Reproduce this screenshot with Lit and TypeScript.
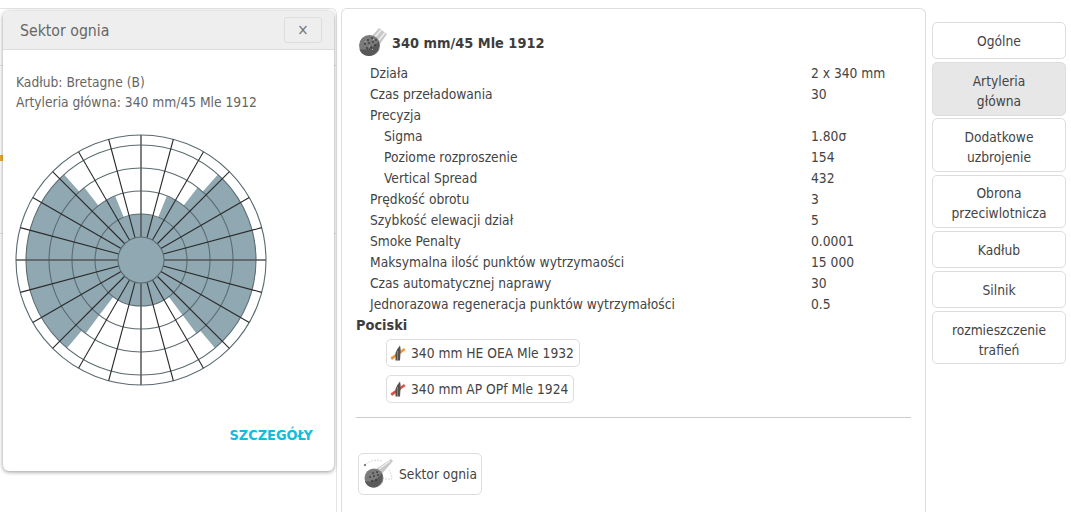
import { LitElement, html, svg, css } from 'lit';
import { customElement, property } from 'lit/decorators.js';

const CX = 126;
const CY = 126;
const RINGS = [23, 46, 69, 92, 115, 125];

interface Row {
  label: string;
  value?: string;
  sub?: boolean;
}

const ROWS: Row[] = [
  { label: 'Działa', value: '2 x 340 mm' },
  { label: 'Czas przeładowania', value: '30' },
  { label: 'Precyzja' },
  { label: 'Sigma', value: '1.80σ', sub: true },
  { label: 'Poziome rozproszenie', value: '154', sub: true },
  { label: 'Vertical Spread', value: '432', sub: true },
  { label: 'Prędkość obrotu', value: '3' },
  { label: 'Szybkość elewacji dział', value: '5' },
  { label: 'Smoke Penalty', value: '0.0001' },
  { label: 'Maksymalna ilość punktów wytrzymaości', value: '15 000' },
  { label: 'Czas automatycznej naprawy', value: '30' },
  { label: 'Jednorazowa regeneracja punktów wytrzymałości', value: '0.5' },
];

const NAV = [
  ['Ogólne'],
  ['Artyleria', 'główna'],
  ['Dodatkowe', 'uzbrojenie'],
  ['Obrona', 'przeciwlotnicza'],
  ['Kadłub'],
  ['Silnik'],
  ['rozmieszczenie', 'trafień'],
];

// angle in degrees clockwise from the bow (up)
function pt(r: number, deg: number) {
  const a = (deg * Math.PI) / 180;
  return `${(CX + r * Math.sin(a)).toFixed(2)} ${(CY - r * Math.cos(a)).toFixed(2)}`;
}

// ring sector, from angle a to angle b going clockwise
function sector(r0: number, r1: number, a: number, b: number) {
  const large = b - a > 180 ? 1 : 0;
  return `M${pt(r0, a)} A${r0} ${r0} 0 ${large} 1 ${pt(r0, b)} L${pt(r1, b)} A${r1} ${r1} 0 ${large} 0 ${pt(r1, a)} Z`;
}

// [inner, outer, angle from bow, angle from stern] on each side
const ARCS = [
  [46, 69, 22, 37],
  [69, 92, 38, 37],
  [92, 115, 42, 40],
];

function shadePath() {
  let d = `M${CX} ${CY - 46} A46 46 0 1 1 ${CX} ${CY + 46} A46 46 0 1 1 ${CX} ${CY - 46} Z`;
  for (const [r0, r1, bow, stern] of ARCS) {
    d += ' ' + sector(r0, r1, bow, 180 - stern);
    d += ' ' + sector(r0, r1, 180 + stern, 360 - bow);
  }
  return d;
}

@customElement('sector-chart')
export class SectorChart extends LitElement {
  static override styles = css`
    :host {
      display: block;
    }
    svg {
      display: block;
    }
    .ring {
      fill: none;
      stroke: #5b6b70;
      stroke-width: 1.1;
    }
    .spoke {
      stroke: #2a2a2a;
      stroke-width: 1.1;
    }
    .axis {
      stroke: #555;
      stroke-width: 2;
      opacity: 0.75;
    }
    .shade {
      fill: #8fa8b2;
    }
    .hub {
      fill: #8fa8b2;
      stroke: #5b6b70;
      stroke-width: 1.1;
    }
  `;

  override render() {
    const spokes = [];
    for (let deg = 15; deg < 360; deg += 15) {
      if (deg % 90 === 0) continue;
      spokes.push(svg`<path class="spoke" d="M${pt(23, deg)} L${pt(125, deg)}" />`);
    }
    return html`
      <svg width="252" height="252" viewBox="0 0 252 252">
        <path class="shade" d="${shadePath()}" />
        ${RINGS.slice(1).map(
          (r) => svg`<circle class="ring" cx="${CX}" cy="${CY}" r="${r}" />`
        )}
        ${spokes}
        <path class="axis" d="M${CX} ${CY - 125} V${CY - 23} M${CX} ${CY + 23} V${CY + 125}" />
        <path class="axis" d="M${CX - 125} ${CY} H${CX - 23} M${CX + 23} ${CY} H${CX + 125}" />
        <circle class="hub" cx="${CX}" cy="${CY}" r="23" />
      </svg>
    `;
  }
}

@customElement('gun-icon')
export class GunIcon extends LitElement {
  static override styles = css`
    :host {
      display: block;
      flex: none;
    }
    svg {
      display: block;
    }
  `;

  override render() {
    return html`
      <svg width="32" height="32" viewBox="0 0 32 32">
        <path d="M14 9 L21 1 L29 7 L22 17 Z" fill="#c8c8c8" />
        <path d="M17 10 L23.5 2.5 M21 13 L27 5.5" stroke="#efefef" stroke-width="1.4" />
        <circle cx="11.5" cy="18.5" r="10.5" fill="#7a7a7a" />
        <path d="M1.5 22 C7 24 15 21 21 14 C23 22 17 29 11 29 C6 29 2.5 26 1.5 22 Z" fill="#585858" />
        <path d="M9 13h2M13 11h2M6 17h2M10 16h2M14 15h2M17 13h2M8 21h2M12 20h2M16 18h2" stroke="#242424" stroke-width="1.2" />
        <path d="M7 14l1 1M11 19l1 1M15 12l1 1M14 22l1 1" stroke="#b4b4b4" stroke-width="1" />
      </svg>
    `;
  }
}

@customElement('sector-icon')
export class SectorIcon extends LitElement {
  static override styles = css`
    :host {
      display: block;
      flex: none;
    }
    svg {
      display: block;
    }
  `;

  override render() {
    return html`
      <svg width="32" height="32" viewBox="0 0 32 32">
        <path d="M1 8 A17 17 0 0 1 19 3 M26 12 A16 16 0 0 1 29 21 L22 21" fill="none" stroke="#bbb" stroke-width="0.8" stroke-dasharray="1.5 1.5" />
        <circle cx="2" cy="7" r="1.1" fill="#666" />
        <path d="M13 11 L28 1 L30 3 L18 17 Z" fill="#c8c8c8" />
        <path d="M16 11 L27 3" stroke="#efefef" stroke-width="1.2" />
        <circle cx="11" cy="20" r="9.5" fill="#7c7c7c" />
        <path d="M2 23 C7 25 14 22 19 15 C21 22 16 29.5 11 29.5 C6 29.5 3 27 2 23 Z" fill="#5a5a5a" />
        <path d="M9 15h2M13 14h2M6 19h2M10 18h2M14 17h2M8 23h2M12 22h2" stroke="#262626" stroke-width="1.1" />
      </svg>
    `;
  }
}

@customElement('shell-icon')
export class ShellIcon extends LitElement {
  @property() tint = '#ee8a2c';

  static override styles = css`
    :host {
      display: block;
      flex: none;
    }
    svg {
      display: block;
    }
  `;

  override render() {
    return html`
      <svg width="16" height="16" viewBox="0 0 16 16">
        <path d="M0.5 12.5 L14 3 L15.5 5 L2 15 Z" fill="${this.tint}" opacity="0.9" />
        <path d="M5.5 15.5 L5.5 8 Q7.5 3 10 0.5 Q11 4 10.5 8 L10 15.5 Z" fill="#54504b" />
        <path d="M7.5 6 L7.5 15" stroke="#8a847c" stroke-width="1" />
      </svg>
    `;
  }
}

@customElement('app-root')
export class AppRoot extends LitElement {
  static override styles = css`
    :host {
      display: block;
      position: relative;
      height: 512px;
      overflow: hidden;
      background: #fff;
      font-family: 'DejaVu Sans Condensed', 'DejaVu Sans', sans-serif;
      font-size: 13.7px;
      color: #444;
    }
    .page {
      display: grid;
      grid-template-columns: 337px 585px 136px;
      column-gap: 4px;
      padding-top: 8px;
      height: 512px;
      box-sizing: border-box;
    }
    .behind {
      border: 1px solid #e4e4e4;
      border-left: none;
      border-bottom: none;
      border-top-right-radius: 6px;
    }
    .behind hr {
      border: none;
      border-top: 1px solid #e4e4e4;
      margin: 56px 0 0;
    }
    .behind hr + hr {
      margin-top: 167px;
    }
    .mark {
      position: absolute;
      left: 0;
      top: 155px;
      width: 3px;
      height: 6px;
      background: #eeb030;
    }
    .panel {
      border: 1px solid #ddd;
      border-bottom: none;
      border-radius: 6px 6px 0 0;
      padding: 18px 14px 0 14px;
      box-sizing: border-box;
    }
    .title {
      display: flex;
      align-items: center;
      gap: 2px;
      height: 32px;
      margin: 0 0 0 2px;
      font-weight: 700;
      font-size: 14.4px;
      color: #3d3d3d;
    }
    .stats {
      display: grid;
      grid-template-columns: 441px 1fr;
      grid-auto-rows: 21px;
      line-height: 21px;
      margin: 4px 0 0 14px;
    }
    .sub {
      padding-left: 14px;
    }
    .pociski {
      font-weight: 700;
      font-size: 14.4px;
      line-height: 21px;
      color: #3d3d3d;
    }
    .shells {
      display: flex;
      flex-direction: column;
      align-items: flex-start;
      gap: 8px;
      margin: 3px 0 0 30px;
    }
    .chip {
      display: flex;
      align-items: center;
      gap: 5px;
      height: 28px;
      padding: 0 5px 0 3px;
      box-sizing: border-box;
      border: 1px solid #ddd;
      border-radius: 5px;
      white-space: nowrap;
    }
    .rule {
      border: none;
      border-top: 1px solid #ccc;
      margin: 14px 0 0;
    }
    .sektor {
      display: inline-flex;
      align-items: center;
      gap: 4px;
      height: 42px;
      margin: 35px 0 0 2px;
      padding: 0 4px;
      box-sizing: border-box;
      border: 1px solid #ddd;
      border-radius: 5px;
    }
    .nav {
      display: flex;
      flex-direction: column;
      gap: 2.6px;
      padding: 14px 0 0 2px;
    }
    .tab {
      height: 37.4px;
      padding: 6px;
      box-sizing: border-box;
      border: 1px solid #ddd;
      border-radius: 5px;
      display: flex;
      flex-direction: column;
      align-items: center;
      justify-content: center;
      line-height: 20px;
      text-align: center;
    }
    .tab.two {
      height: 53.7px;
      padding: 8px 6px 4px;
    }
    .tab.active {
      background: #e7e7e7;
    }
    .modal {
      position: absolute;
      left: 3px;
      top: 11px;
      width: 331px;
      height: 460px;
      box-sizing: border-box;
      background: #fff;
      border-radius: 6px;
      box-shadow: 0 1px 4px rgba(0, 0, 0, 0.42);
      display: flex;
      flex-direction: column;
      color: #666;
    }
    .head {
      display: flex;
      align-items: center;
      justify-content: space-between;
      height: 38px;
      padding: 0 12px 0 17px;
      background: #eee;
      border-bottom: 1px solid #ddd;
      border-radius: 6px 6px 0 0;
      font-size: 15.7px;
      color: #666;
    }
    .close {
      width: 38px;
      height: 26px;
      box-sizing: border-box;
      border: 1px solid #ddd;
      border-radius: 3px;
      display: flex;
      align-items: center;
      justify-content: center;
      font-size: 15px;
      color: #777;
    }
    .body {
      flex: 1;
      display: flex;
      flex-direction: column;
      padding: 22px 21px 0 13px;
      line-height: 20px;
    }
    sector-chart {
      margin: 22px 0 0 -1px;
    }
    .more {
      margin-top: auto;
      margin-bottom: 26px;
      align-self: flex-end;
      font-weight: 700;
      font-size: 14.4px;
      color: #13bcdc;
    }
  `;

  override render() {
    return html`
      <div class="page">
        <div class="behind"><hr /><hr /></div>
        <div class="panel">
          <div class="title"><gun-icon></gun-icon>340 mm/45 Mle 1912</div>
          <div class="stats">
            ${ROWS.map(
              (r) => html`
                <div class="${r.sub ? 'sub' : ''}">${r.label}</div>
                <div>${r.value ?? ''}</div>
              `
            )}
          </div>
          <div class="pociski">Pociski</div>
          <div class="shells">
            <div class="chip"><shell-icon></shell-icon>340 mm HE OEA Mle 1932</div>
            <div class="chip"><shell-icon tint="#d8402f"></shell-icon>340 mm AP OPf Mle 1924</div>
          </div>
          <hr class="rule" />
          <div class="sektor"><sector-icon></sector-icon>Sektor ognia</div>
        </div>
        <div class="nav">
          ${NAV.map(
            (lines, i) => html`
              <div class="tab ${lines.length > 1 ? 'two' : ''} ${i === 1 ? 'active' : ''}">
                ${lines.map((l) => html`<div>${l}</div>`)}
              </div>
            `
          )}
        </div>
      </div>
      <div class="mark"></div>
      <div class="modal">
        <div class="head">
          <span>Sektor ognia</span>
          <div class="close">×</div>
        </div>
        <div class="body">
          <div>Kadłub: Bretagne (B)</div>
          <div>Artyleria główna: 340 mm/45 Mle 1912</div>
          <sector-chart></sector-chart>
          <div class="more">SZCZEGÓŁY</div>
        </div>
      </div>
    `;
  }
}
